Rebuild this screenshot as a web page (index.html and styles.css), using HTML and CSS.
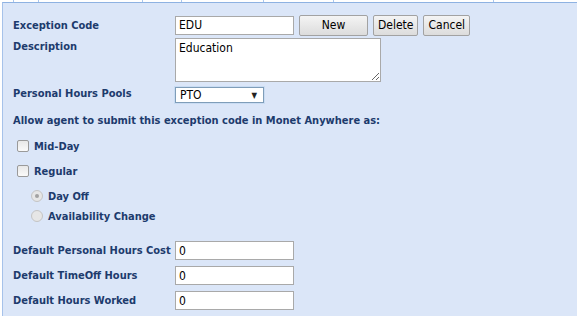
FILE: index.html
```html
<!DOCTYPE html>
<html>
<head>
<meta charset="utf-8">
<link rel="stylesheet" href="styles.css">
</head>
<body>
<div class="ticks"><span></span><span></span><span></span><span></span><span></span><span></span><span></span></div>
<div class="panel">
  <div class="top-grid">
    <label class="lbl lbl-center">Exception Code</label>
    <div class="row-ctrls">
      <input class="txt code" type="text" value="EDU">
      <button class="btn btn-new">New</button>
      <button class="btn">Delete</button>
      <button class="btn">Cancel</button>
    </div>
    <label class="lbl lbl-desc">Description</label>
    <div class="desc-wrap"><textarea class="desc">Education</textarea></div>
    <label class="lbl lbl-pool">Personal Hours Pools</label>
    <div class="pool-wrap">
      <div class="select"><span>PTO</span><span class="arrow">&#9660;</span></div>
    </div>
  </div>
  <div class="allow">Allow agent to submit this exception code in Monet Anywhere as:</div>
  <div class="opts">
    <div class="opt chk-row"><span class="chk"></span><span class="lbl">Mid-Day</span></div>
    <div class="opt chk-row"><span class="chk"></span><span class="lbl">Regular</span></div>
    <div class="opt radio-row"><span class="radio on"></span><span class="lbl">Day Off</span></div>
    <div class="opt radio-row last"><span class="radio"></span><span class="lbl">Availability Change</span></div>
  </div>
  <div class="defaults">
    <label class="lbl">Default Personal Hours Cost</label><input class="txt num" type="text" value="0">
    <label class="lbl">Default TimeOff Hours</label><input class="txt num" type="text" value="0">
    <label class="lbl">Default Hours Worked</label><input class="txt num" type="text" value="0">
  </div>
</div>
</body>
</html>
```
FILE: styles.css
```css
html, body {
  margin: 0;
  padding: 0;
  background: #ffffff;
  font-family: "DejaVu Sans Condensed", "DejaVu Sans", sans-serif;
  font-stretch: condensed;
}
.ticks {
  height: 2px;
  display: flex;
  background: #ffffff;
}
.ticks span {
  width: 1px;
  height: 2px;
  background: #a9c6ee;
}
.ticks span:nth-child(1) { margin-left: 13px; }
.ticks span:nth-child(2) { margin-left: 24px; }
.ticks span:nth-child(3) { margin-left: 103px; }
.ticks span:nth-child(4) { margin-left: 38px; }
.ticks span:nth-child(5) { margin-left: 81px; }
.ticks span:nth-child(6) { margin-left: 69px; }
.ticks span:nth-child(7) { margin-left: 159px; }
.panel {
  background: #dbe6f8;
  border-top: 1px solid #8eb2e2;
  border-left: 1px solid #a6c2ea;
  margin-left: 2px;
  height: 314px;
  box-sizing: border-box;
  padding: 12px 0 0 10px;
}
.lbl {
  font-size: 11px;
  font-weight: bold;
  color: #1d3b6d;
  white-space: nowrap;
}
.top-grid {
  display: grid;
  grid-template-columns: 162px auto;
  align-items: start;
}
.lbl-center { align-self: center; }
.row-ctrls {
  display: flex;
  gap: 5px;
  align-items: center;
  height: 20px;
}
.txt {
  box-sizing: border-box;
  border: 1px solid #a9a9a9;
  background: #fff;
  font-family: "DejaVu Sans Condensed", "DejaVu Sans", sans-serif;
  font-size: 12px;
  color: #000;
  padding: 0 3px;
  margin: 0;
  outline: none;
}
.code { width: 119px; height: 19px; }
.btn {
  box-sizing: border-box;
  height: 21px;
  margin: 0;
  padding: 0 4px;
  border: 1px solid #a2a2a2;
  border-radius: 2px;
  background: linear-gradient(#f4f4f4, #dcdcdc);
  font-family: "DejaVu Sans Condensed", "DejaVu Sans", sans-serif;
  font-size: 12px;
  color: #000;
}
.btn-new { width: 69px; }
.lbl-desc { padding-top: 2px; margin-top: 3px; }
.desc-wrap { margin-top: 3px; display: flex; }
.desc {
  box-sizing: border-box;
  width: 206px;
  height: 44px;
  border: 1px solid #a9a9a9;
  background: #fff;
  font-family: "DejaVu Sans Condensed", "DejaVu Sans", sans-serif;
  font-size: 12px;
  padding: 2px 3px;
  margin: 0;
  resize: both;
}
.lbl-pool { margin-top: 5px; }
.pool-wrap { margin-top: 5px; display: flex; }
.select {
  box-sizing: border-box;
  width: 89px;
  height: 16px;
  border: 1px solid #7f9db9;
  background: #fff;
  box-shadow: 0 0 0 1px #c9dcf3;
  display: flex;
  align-items: center;
  justify-content: space-between;
  padding: 0 6px 0 4px;
  font-size: 12px;
  color: #000;
}
.arrow { font-size: 8px; color: #222; }
.allow {
  margin-top: 11px;
  font-size: 11px;
  font-weight: bold;
  color: #1d3b6d;
  line-height: 13px;
}
.opts {
  display: flex;
  flex-direction: column;
  gap: 5px;
  margin-top: 9px;
}
.opt {
  display: flex;
  align-items: center;
  gap: 5px;
  height: 20px;
}
.chk-row { padding-left: 4px; }
.radio-row { padding-left: 18px; }
.radio-row.last { margin-top: -5px; }
.chk {
  box-sizing: border-box;
  width: 12px;
  height: 12px;
  border: 1px solid #9a9a9a;
  border-radius: 2px;
  background: linear-gradient(#e8e8e8, #fafafa);
}
.radio {
  box-sizing: border-box;
  width: 12px;
  height: 12px;
  border: 1px solid #c4c4c4;
  border-radius: 50%;
  background: #e6e6e6;
  display: flex;
  align-items: center;
  justify-content: center;
}
.radio.on::after {
  content: "";
  width: 4px;
  height: 4px;
  border-radius: 50%;
  background: #a2a2a2;
}
.defaults {
  margin-top: 15px;
  display: grid;
  grid-template-columns: 162px 119px;
  grid-auto-rows: 19px;
  row-gap: 6px;
  align-items: center;
}
.num { width: 119px; height: 19px; }
```
